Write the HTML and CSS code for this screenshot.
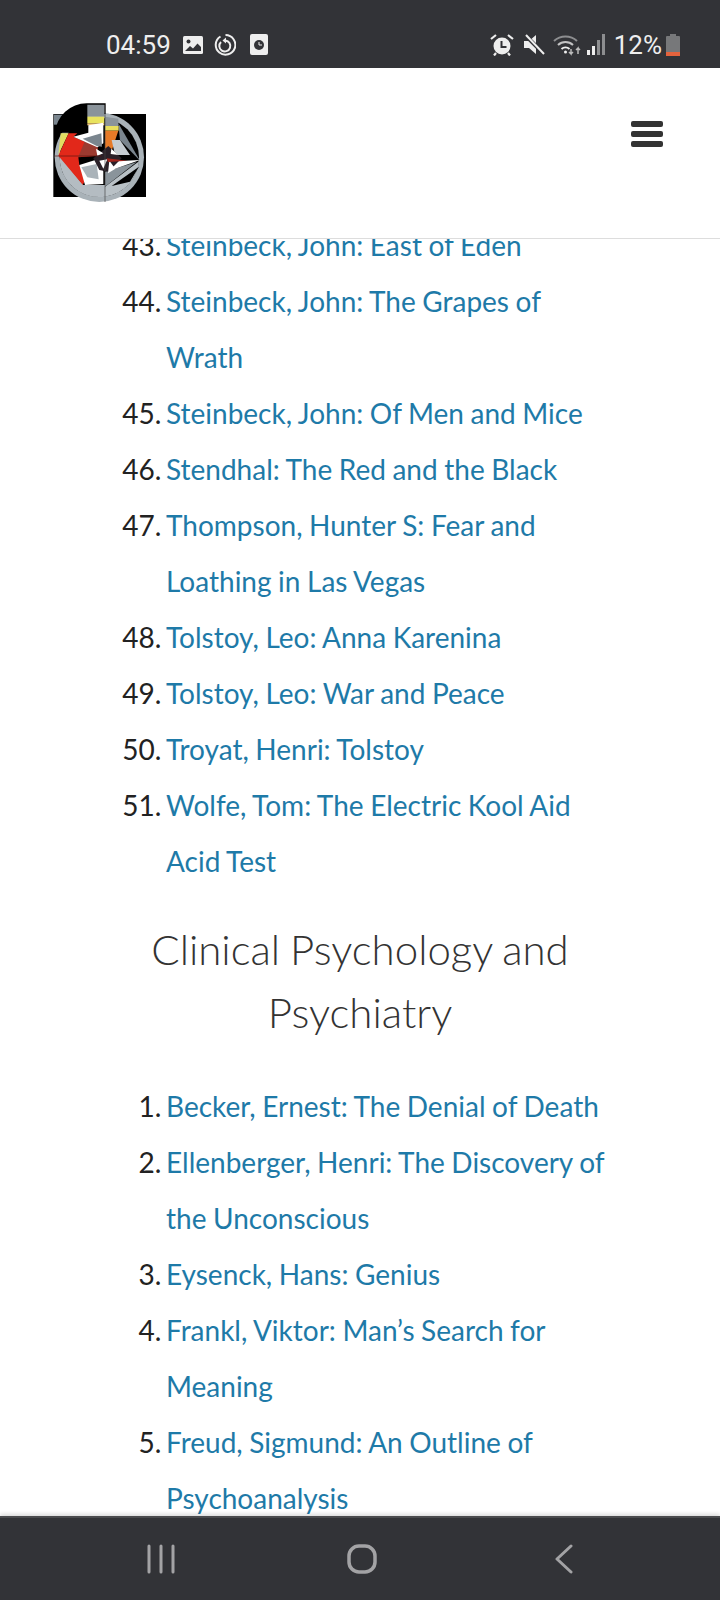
FILE: index.html
```html
<!DOCTYPE html>
<html lang="en">
<head>
    <meta charset="UTF-8">
    <meta name="viewport" content="width=device-width, initial-scale=1.0">
    <title>Reading List</title>
    <link rel="stylesheet" href="styles.css">
</head>
<body>
    <div class="status-bar">
        <span class="status-time">04:59</span>
        <svg class="icon-image" width="20" height="18" viewBox="0 0 20 18"><rect width="20" height="18" rx="1.500" fill="#eee"/><circle cx="5.500" cy="5.500" r="2" fill="#323337"/><path d="M2 15l5-5 3 2.500 4.500-5L18 11v4z" fill="#323337"/></svg>
        <svg class="icon-sync" width="22" height="22" viewBox="0 0 22 22" fill="none" stroke="#eee" stroke-width="2"><path d="M6.500 2.500a9.800 9.800 0 1 0 5-1.400"/><path d="M7 8a5.500 5.500 0 1 0 4.500-1.500"/><path d="M12 3.500v6l-3.500-3z" fill="#eee" stroke="none"/></svg>
        <svg class="icon-card" width="18" height="21" viewBox="0 0 18 21"><rect width="18" height="21" rx="2" fill="#eee"/><circle cx="9" cy="11" r="5" fill="#323337"/><path d="M9 8v3h3" stroke="#eee" fill="none"/></svg>
        <div class="status-right">
            <svg class="icon-alarm" width="24" height="22" viewBox="0 0 24 22"><circle cx="12" cy="12" r="8.500" fill="#eee"/><path d="M11.500 7v6h5" stroke="#323337" stroke-width="2" fill="none"/><path d="M1 5l5-4M23 5l-5-4M6 19l-2 2.500M18 19l2 2.500" stroke="#eee" stroke-width="2.200"/></svg>
            <svg class="icon-mute" width="21" height="21" viewBox="0 0 21 21"><path d="M0 7h5l7-6v14L12 20 5 14H0z" fill="#eee"/><path d="M1 1l19 19" stroke="#323337" stroke-width="4"/><path d="M2 1l18 19" stroke="#eee" stroke-width="2"/></svg>
            <svg class="icon-wifi" width="28" height="22" viewBox="0 0 28 22" fill="none" stroke="#8d8e90" stroke-width="2"><path d="M1 7a17 17 0 0 1 23 0"/><path d="M5 11a11 11 0 0 1 15 0" stroke="#c4c4c5"/><path d="M8.500 15a6 6 0 0 1 8 0" stroke="#eee"/><circle cx="12.500" cy="18" r="1.500" fill="#eee" stroke="none"/><path d="M18 15v5l-2-2M18 20l2-2M25 20v-6l-2 2M25 14l2 2" stroke="#bbb" stroke-width="1.500"/></svg>
            <svg class="icon-signal" width="18" height="21" viewBox="0 0 18 21"><rect x="0" y="16" width="3" height="5" fill="#eee"/><rect x="5" y="12" width="3" height="9" fill="#eee"/><rect x="10" y="6" width="3" height="15" fill="#8d8e90"/><rect x="15" y="0" width="3" height="21" fill="#8d8e90"/></svg>
            <span class="status-battery">12%</span>
            <svg class="icon-battery" width="14" height="22" viewBox="0 0 14 22"><path d="M4 0h6v2h3a1 1 0 0 1 1 1v19H0V3a1 1 0 0 1 1-1h3z" fill="#77787a"/><rect y="18" width="14" height="4" fill="#e4633d"/></svg>
        </div>
    </div>

    <header class="site-header">
        <svg class="logo" width="120" height="120" viewBox="0 0 360 360">
            <rect x="40" y="72" width="278" height="249" fill="#000"/>
            <rect x="42" y="74" width="30" height="30" fill="#7a858e"/>
            <!-- outer ring -->
            <circle cx="178" cy="202" r="134" fill="#a9b2b8"/>
            <circle cx="178" cy="202" r="119" fill="#000"/>
            <!-- lower disc -->
            <path d="M59 198 130 285 195 285 195 320A119 119 0 0 1 59 198z" fill="#b4bcc2"/>
            <path d="M195 290 297 214A119 119 0 0 1 195 320z" fill="#b9c1c6"/>
            <path d="M215 288 297 230 270 275z" fill="#000"/>
            <path d="M195 245 290 216 195 290z" fill="#8a949b"/>
            <!-- upper right -->
            <path d="M195 80 235 86 235 108 195 108z" fill="#8a939a"/>
            <path d="M235 100 300 212 240 150z" fill="#7a858e"/>
            <path d="M195 108H236V122H195z" fill="#e8de5c"/>
            <path d="M195 122 235 122 215 182 195 182z" fill="#e67a28"/>
            <path d="M215 150 240 150 270 195 225 195z" fill="#c5ccd1"/>
            <path d="M195 215 300 210 215 240z" fill="#fff"/>
            <!-- upper left tab -->
            <path d="M140 42H193V80H140z" fill="#8a939a"/>
            <path d="M140 80H193V100H140z" fill="#e9e35e"/>
            <path d="M140 100H193V106H140z" fill="#f2c77a"/>
            <!-- left wedge -->
            <path d="M62 130H86L55 195z" fill="#e3dd62"/>
            <path d="M86 130 112 130 100 140 172 172 176 197 115 202 118 225 140 265 128 284 55 197z" fill="#e2281a"/>
            <path d="M140 140 172 172 176 197 115 200z" fill="#9c3a30"/>
            <path d="M100 140 145 128 145 106 190 98 190 160 172 172z" fill="#fff"/>
            <path d="M128 146 184 130 186 170 170 168z" fill="#7a858e"/>
            <path d="M118 225 178 206 190 245 190 282 135 285z" fill="#fff"/>
            <path d="M124 232 170 222 176 268 142 262z" fill="#aab3b9"/>
            <!-- centre star -->
            <path d="M160 205 205 168 245 205 205 245 178 240z" fill="#2a2028"/>
            <path d="M168 176 190 190 172 197zM214 176 235 195 212 192zM178 212 202 208 190 236zM208 212 226 236 204 250z" fill="#fff"/>
            <path d="M200 205 262 212 204 216z" fill="#a3241c"/>
            <path d="M45 198H185" stroke="#5a1510" stroke-width="2"/>
            <path d="M195 72V336" stroke="#444" stroke-width="2"/>
            <!-- black quarter, on top -->
            <path d="M45 128A96 96 0 0 1 140 40H197V72H193V44H142V128z" fill="#000"/>
        </svg>
        <button class="menu-toggle" type="button" aria-label="Menu"><span></span><span></span><span></span></button>
    </header>

    <main class="content">
        <div class="article">
            <ol start="43" class="book-list">
                <li><a href="#">Steinbeck, John: East of Eden</a></li>
                <li><a href="#">Steinbeck, John: The Grapes of Wrath</a></li>
                <li><a href="#">Steinbeck, John: Of Men and Mice</a></li>
                <li><a href="#">Stendhal: The Red and the Black</a></li>
                <li><a href="#">Thompson, Hunter S: Fear and Loathing in Las Vegas</a></li>
                <li><a href="#">Tolstoy, Leo: Anna Karenina</a></li>
                <li><a href="#">Tolstoy, Leo: War and Peace</a></li>
                <li><a href="#">Troyat, Henri: Tolstoy</a></li>
                <li><a href="#">Wolfe, Tom: The Electric Kool Aid Acid Test</a></li>
            </ol>
            <h2>Clinical Psychology and Psychiatry</h2>
            <ol class="book-list">
                <li><a href="#">Becker, Ernest: The Denial of Death</a></li>
                <li><a href="#">Ellenberger, Henri: The Discovery of the Unconscious</a></li>
                <li><a href="#">Eysenck, Hans: Genius</a></li>
                <li><a href="#">Frankl, Viktor: Man’s Search for Meaning</a></li>
                <li><a href="#">Freud, Sigmund: An Outline of Psychoanalysis</a></li>
            </ol>
        </div>
    </main>

    <nav class="nav-bar">
        <svg width="28" height="30" viewBox="0 0 28 30" stroke="#a3a3a5" stroke-width="3" stroke-linecap="round"><path d="M2 2v26M14 2v26M26 2v26"/></svg>
        <svg class="nav-home" width="30" height="30" viewBox="0 0 30 30" fill="none" stroke="#a3a3a5" stroke-width="3.500"><rect x="2" y="2" width="26" height="26" rx="10"/></svg>
        <svg width="18" height="30" viewBox="0 0 18 30" fill="none" stroke="#a3a3a5" stroke-width="3" stroke-linecap="round" stroke-linejoin="round"><path d="M16 2 2 15l14 13"/></svg>
    </nav>
</body>
</html>
```

FILE: styles.css
```css
/* General reset */
* {
    margin: 0;
    padding: 0;
    box-sizing: border-box;
}

body {
    width: 720px;
    height: 1600px;
    overflow: hidden;
    display: flex;
    flex-direction: column;
    font-family: Lato, sans-serif;
    background-color: #fff;
}

/* Phone status bar */
.status-bar {
    height: 68px;
    flex-shrink: 0;
    background-color: #323337;
    color: #eee;
    font-family: Roboto, sans-serif;
    font-size: 26px;
    display: flex;
    align-items: center;
    padding: 21px 40px 0 106px;
}

.status-time {
    margin-right: 12px;
}

.icon-sync {
    margin-left: 11px;
}

.icon-card {
    margin-left: 14px;
}

.status-right {
    margin-left: auto;
    display: flex;
    align-items: center;
}

.icon-mute {
    margin-left: 10px;
}

.icon-wifi {
    margin-left: 8px;
}

.icon-signal {
    margin-left: 6px;
}

.status-battery {
    margin-left: 9px;
}

.icon-battery {
    margin-left: 4px;
}

/* Site header */
.site-header {
    height: 171px;
    flex-shrink: 0;
    border-bottom: 1px solid #ddd;
    background-color: #fff;
    display: flex;
    justify-content: space-between;
    padding: 22px 57px 0 40px;
    position: relative;
    z-index: 10;
}

.logo {
    display: block;
}

.menu-toggle {
    width: 32px;
    height: 26px;
    margin-top: 31px;
    border: none;
    background: none;
    display: flex;
    flex-direction: column;
    justify-content: space-between;
}

.menu-toggle span {
    display: block;
    height: 6px;
    border-radius: 2px;
    background-color: #333;
}

/* Page content */
.content {
    flex: 1;
    overflow: hidden;
    min-height: 0;
}

.article {
    margin-top: -22px;
    padding: 0 104px;
}

.book-list {
    padding-left: 62px;
    font-size: 28px;
    line-height: 56px;
    color: #222;
    word-spacing: -2.5px;
}

.book-list a {
    color: #1e7aa8;
    text-decoration: none;
    word-spacing: -0.6px;
}

h2 {
    font-size: 42px;
    font-weight: 300;
    line-height: 63px;
    color: #333;
    text-align: center;
    word-spacing: -1.5px;
    margin: 29px 0 34px;
}

/* Phone navigation bar */
.nav-bar {
    height: 84px;
    flex-shrink: 0;
    background-color: #323337;
    border-top: 2px solid #4a4b4e;
    box-shadow: 0 -2px 4px rgba(0, 0, 0, 0.15);
    display: flex;
    align-items: center;
    padding: 0 147px;
    justify-content: space-between;
    position: relative;
}

.nav-home {
    margin-right: 6px;
}
```
